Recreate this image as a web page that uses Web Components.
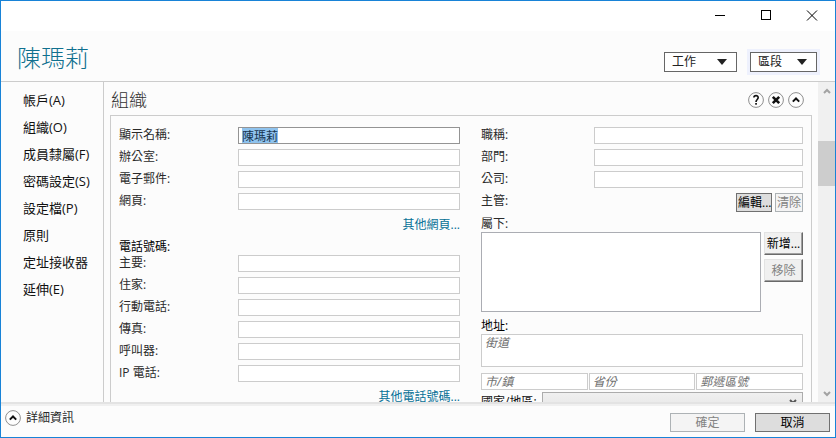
<!DOCTYPE html>
<html lang="zh-Hant">
<head>
<meta charset="utf-8">
<title>陳瑪莉</title>
<style>
  html, body { margin: 0; height: 100%; }
  body {
    font-family: "Open Sans", "Noto Sans CJK TC", sans-serif;
    font-size: 12px; line-height: 16px; color: #2a2a2a; background: #fcfcfc;
    --line: #cccccc; --accent: #10708f; --surface: #fcfcfc;
  }
</style>
</head>
<body>
<user-window></user-window>

<template id="t-window-buttons">
  <style>
    :host { display: flex; justify-content: flex-end; height: 30px; background: #fff; flex: none; }
    button { width: 46px; padding: 0; border: 0; background: none; display: grid; place-items: center; }
    svg { width: 12px; height: 12px; fill: none; stroke: #000; }
  </style>
  <button aria-label="最小化"><svg viewBox="0 0 12 12"><path d="M1 5.5H11" shape-rendering="crispEdges"/></svg></button>
  <button aria-label="最大化"><svg viewBox="0 0 12 12"><path d="M1.5 0.5H10.5V9.5H1.5Z" shape-rendering="crispEdges"/></svg></button>
  <button aria-label="關閉"><svg viewBox="0 0 12 12"><path d="M1 0.5L11 10.5M11 0.5L1 10.5"/></svg></button>
</template>

<template id="t-menu-button">
  <style>
    :host { display: block; }
    :host([current]) { box-shadow: 0 0 0 3px #eef1fd; }
    button {
      display: flex; align-items: center; gap: 21px; height: 20px; padding: 0 9px 0 7px;
      border: 1px solid #666; background: #fff; font: inherit; color: #222;
    }
    :host([current]) button { gap: 15px; }
    svg { width: 10px; height: 6px; fill: #222; }
  </style>
  <button aria-haspopup="menu"><slot></slot><svg viewBox="0 0 10 6"><path d="M0 0H10L5 6Z"/></svg></button>
</template>

<template id="t-round-button">
  <style>
    :host { display: block; }
    button { display: block; width: 16px; height: 16px; padding: 0; border: 0; background: none; }
    svg { display: block; width: 16px; height: 16px; }
    circle { fill: #fdfdfd; stroke: #8e8e8e; }
    path { fill: none; stroke: #111; stroke-width: 2; }
    path, .dot { display: none; }
    :host([icon=help]) .help, :host([icon=close]) .close, :host([icon=up]) .up { display: inline; }
    .help { stroke-width: 1.6; }
    .close { stroke-width: 2.6; }
    rect { fill: #111; }
  </style>
  <button><svg viewBox="0 0 16 16">
    <circle cx="8" cy="8" r="7.4"/>
    <path class="help" d="M5.9 5.6C5.9 2.9 10.2 2.9 10.2 5.6C10.2 7.5 8 7.6 8 10"/>
    <rect class="dot help" x="7.2" y="11" width="1.7" height="1.7"/>
    <path class="close" d="M4.8 4.8L11.2 11.2M11.2 4.8L4.8 11.2"/>
    <path class="up" d="M4.8 9.6L8 6.5L11.2 9.6"/>
  </svg></button>
</template>

<template id="t-side-link">
  <style>
    :host { display: block; }
    a { display: block; font-size: 13px; line-height: 27px; color: #111; text-decoration: none; white-space: nowrap; }
  </style>
  <a href="#"><slot></slot></a>
</template>

<template id="t-text-field">
  <style>
    :host { display: grid; grid-template-columns: var(--label-width, 119px) minmax(0, 1fr); height: 17px; }
    label { line-height: 15px; white-space: nowrap; }
    input {
      box-sizing: border-box; width: 100%; min-width: 0; height: 17px; padding: 0 3px;
      border: 1px solid var(--line); border-radius: 0; background: #fff; outline: 0;
      font: inherit; line-height: 15px; color: #16344e;
    }
    input:focus { border-color: #949494; }
    input::selection { background: #8fc3ee; color: #16344e; }
  </style>
  <label for="f"></label><input id="f" type="text">
</template>

<template id="t-hint-field">
  <style>
    :host { display: block; min-width: 0; }
    input, textarea {
      display: block; box-sizing: border-box; width: 100%; height: 17px; padding: 0 3px; margin: 0;
      border: 1px solid var(--line); border-radius: 0; background: #fff; resize: none;
      font: inherit; line-height: 15px; overflow: hidden;
    }
    textarea { height: 33px; }
    ::placeholder { color: #707070; font-style: italic; opacity: 1; }
  </style>
</template>

<template id="t-push-button">
  <style>
    :host { display: block; }
    button {
      box-sizing: border-box; width: 100%; height: 19px; padding: 0 1px;
      border: 1px solid #707070; border-radius: 0; background: #ddd;
      font: inherit; line-height: 15px; color: #000; white-space: nowrap;
    }
    button:disabled { border-color: #adb2b5; background: #f4f4f4; color: #838383; }
    :host([raised]) button {
      height: 23px; background: #f0f0f0;
      border-color: #e3e3e3 #696969 #696969 #e3e3e3; box-shadow: inset -1px -1px #a0a0a0;
    }
  </style>
  <button><slot></slot></button>
</template>

<template id="t-more-link">
  <style>
    :host { display: block; text-align: right; }
    a { color: #067096; text-decoration: none; }
  </style>
  <a href="#"><slot></slot></a>
</template>

<template id="t-scroll-track">
  <style>
    :host { display: flex; flex-direction: column; width: 17px; background: #f0f0f0; }
    button { width: 17px; height: 17px; padding: 0; border: 0; background: none; display: grid; place-items: center; }
    svg { width: 8px; height: 6px; fill: none; stroke: #a2a2a2; stroke-width: 2; }
    .track { flex: 1; padding-top: 42px; }
    .thumb { height: 45px; background: #cdcdcd; }
  </style>
  <button aria-label="向上捲動"><svg viewBox="0 0 8 6"><path d="M1 5L4 2L7 5"/></svg></button>
  <div class="track"><div class="thumb"></div></div>
  <button aria-label="向下捲動"><svg viewBox="0 0 8 6"><path d="M1 1L4 4L7 1"/></svg></button>
</template>

<template id="t-country-select">
  <style>
    :host { display: grid; grid-template-columns: 61px minmax(0, 1fr); align-items: start; }
    label { line-height: 20px; color: #111; white-space: nowrap; }
    .box { display: grid; align-items: center; }
    select, svg { grid-area: 1 / 1; }
    select {
      appearance: none; box-sizing: border-box; width: 100%; height: 20px; margin: 0;
      border: 1px solid #acacac; border-radius: 0; background: linear-gradient(#f0f0f0, #e5e5e5);
      font: inherit;
    }
    svg { justify-self: end; margin-right: 6px; width: 8px; height: 6px; fill: none; stroke: #555; stroke-width: 2; pointer-events: none; }
  </style>
  <label for="c">國家/地區:</label>
  <div class="box"><select id="c"><option></option></select><svg viewBox="0 0 8 6"><path d="M1 1L4 4L7 1"/></svg></div>
</template>

<template id="t-group-panel">
  <style>
    :host { display: block; padding: 0 6px; }
    header { display: flex; align-items: center; height: 33px; padding: 2px 8px 0 1px; gap: 4px; box-sizing: border-box; }
    h2 { flex: 1; margin: 0; font-size: 18px; line-height: 30px; font-weight: 300; color: #333; }
    .frame {
      display: grid; grid-template-columns: minmax(0, 341fr) minmax(0, 322fr); column-gap: 21px;
      padding: 11px 8px 20px; border: 1px solid var(--line);
    }
  </style>
  <header><h2></h2>
    <round-button icon="help" label="說明"></round-button>
    <round-button icon="close" label="移除區段"></round-button>
    <round-button icon="up" label="摺疊"></round-button>
  </header>
  <div class="frame"><slot></slot></div>
</template>

<template id="t-organization-form">
  <style>
    :host { display: block; }
    .column { display: flex; flex-direction: column; }
    .fields { display: grid; gap: 5px; }
    .right .fields { --label-width: 113px; }
    .heading { color: #000; margin-top: 6px; }
    .more { margin-top: 7px; }
    .manager { display: flex; gap: 3px; margin: 5px 0 4px; }
    .manager span { flex: 1; }
    .manager push-button:first-of-type { width: 36px; }
    .manager push-button:last-of-type { width: 28px; }
    .reports { display: grid; grid-template-columns: minmax(0, 1fr) 39px; column-gap: 3px; }
    .reports select {
      box-sizing: border-box; width: 100%; height: 80px; border: 1px solid #abadb3;
      border-radius: 0; background: #fff; margin: 0;
    }
    .actions { display: grid; gap: 4px; align-content: start; }
    .city { display: grid; grid-template-columns: repeat(3, minmax(0, 1fr)); gap: 1px; margin: 6px 0 2px; }
  </style>
  <group-panel heading="組織">
    <div class="column">
      <div class="fields">
        <text-field label="顯示名稱:" value="陳瑪莉" selected></text-field>
        <text-field label="辦公室:"></text-field>
        <text-field label="電子郵件:"></text-field>
        <text-field label="網頁:"></text-field>
      </div>
      <more-link class="more">其他網頁...</more-link>
      <div class="heading">電話號碼:</div>
      <div class="fields">
        <text-field label="主要:"></text-field>
        <text-field label="住家:"></text-field>
        <text-field label="行動電話:"></text-field>
        <text-field label="傳真:"></text-field>
        <text-field label="呼叫器:"></text-field>
        <text-field label="IP 電話:"></text-field>
      </div>
      <more-link class="more">其他電話號碼...</more-link>
    </div>
    <div class="column right">
      <div class="fields">
        <text-field label="職稱:"></text-field>
        <text-field label="部門:"></text-field>
        <text-field label="公司:"></text-field>
      </div>
      <div class="manager">
        <span>主管:</span>
        <push-button>編輯...</push-button>
        <push-button disabled>清除</push-button>
      </div>
      <label for="reports">屬下:</label>
      <div class="reports">
        <select id="reports" size="4"></select>
        <div class="actions">
          <push-button raised>新增...</push-button>
          <push-button raised disabled>移除</push-button>
        </div>
      </div>
      <div class="heading">地址:</div>
      <hint-field multiline hint="街道"></hint-field>
      <div class="city">
        <hint-field hint="市/鎮"></hint-field>
        <hint-field hint="省份"></hint-field>
        <hint-field hint="郵遞區號"></hint-field>
      </div>
      <country-select></country-select>
    </div>
  </group-panel>
</template>

<template id="t-user-window">
  <style>
    :host { display: flex; flex-direction: column; box-sizing: border-box; height: 100vh; border: 1px solid #1883d7; background: var(--surface); }
    header { display: flex; align-items: flex-end; gap: 13px; height: 50px; padding: 0 18px 9px 16px; box-sizing: border-box; flex: none; }
    h1 { flex: 1; margin: 0; font-size: 24px; line-height: 28px; font-weight: 300; color: var(--accent); }
    main { flex: 1; min-height: 0; display: grid; grid-template-columns: 103px minmax(0, 1fr) 17px; grid-template-rows: minmax(0, 1fr); border-top: 1px solid var(--line); }
    nav { border-right: 1px solid var(--line); padding: 5px 0 0 22px; }
    organization-form { overflow: hidden; }
    footer {
      flex: none; display: flex; align-items: flex-start; gap: 10px; height: 28px; padding: 5px 5px 0 4px;
      border-top: 2px solid #e3e3e3; box-shadow: inset 0 2px #f0f0f0;
    }
    .details { flex: 1; display: flex; align-items: center; gap: 5px; padding-top: 1px; }
    footer push-button { width: 75px; margin-top: 4px; }
  </style>
  <window-buttons></window-buttons>
  <header>
    <h1>陳瑪莉</h1>
    <menu-button>工作</menu-button>
    <menu-button current>區段</menu-button>
  </header>
  <main>
    <nav>
      <side-link>帳戶(A)</side-link>
      <side-link>組織(O)</side-link>
      <side-link>成員隸屬(F)</side-link>
      <side-link>密碼設定(S)</side-link>
      <side-link>設定檔(P)</side-link>
      <side-link>原則</side-link>
      <side-link>定址接收器</side-link>
      <side-link>延伸(E)</side-link>
    </nav>
    <organization-form></organization-form>
    <scroll-track></scroll-track>
  </main>
  <footer>
    <div class="details"><round-button icon="up" label="詳細資訊"></round-button><span>詳細資訊</span></div>
    <push-button disabled>確定</push-button>
    <push-button>取消</push-button>
  </footer>
</template>

<script>
  class Part extends HTMLElement {
    constructor() {
      super();
      this.attachShadow({ mode: "open" })
        .append(document.getElementById("t-" + this.localName).content.cloneNode(true));
    }
    find(selector) { return this.shadowRoot.querySelector(selector); }
  }

  for (const name of ["window-buttons", "menu-button", "side-link", "more-link", "scroll-track", "country-select"]) {
    customElements.define(name, class extends Part {});
  }

  customElements.define("round-button", class extends Part {
    connectedCallback() { this.find("button").setAttribute("aria-label", this.getAttribute("label")); }
  });

  customElements.define("push-button", class extends Part {
    connectedCallback() { this.find("button").disabled = this.hasAttribute("disabled"); }
  });

  customElements.define("text-field", class extends Part {
    connectedCallback() {
      const input = this.find("input");
      this.find("label").textContent = this.getAttribute("label");
      input.value = this.getAttribute("value") || "";
      if (this.hasAttribute("selected")) { input.focus(); input.select(); }
    }
  });

  customElements.define("hint-field", class extends Part {
    connectedCallback() {
      const hint = this.getAttribute("hint");
      const box = document.createElement(this.hasAttribute("multiline") ? "textarea" : "input");
      box.placeholder = hint;
      box.setAttribute("aria-label", hint);
      this.shadowRoot.append(box);
    }
  });

  customElements.define("group-panel", class extends Part {
    connectedCallback() { this.find("h2").textContent = this.getAttribute("heading"); }
  });

  customElements.define("organization-form", class extends Part {});
  customElements.define("user-window", class extends Part {});
</script>
</body>
</html>
